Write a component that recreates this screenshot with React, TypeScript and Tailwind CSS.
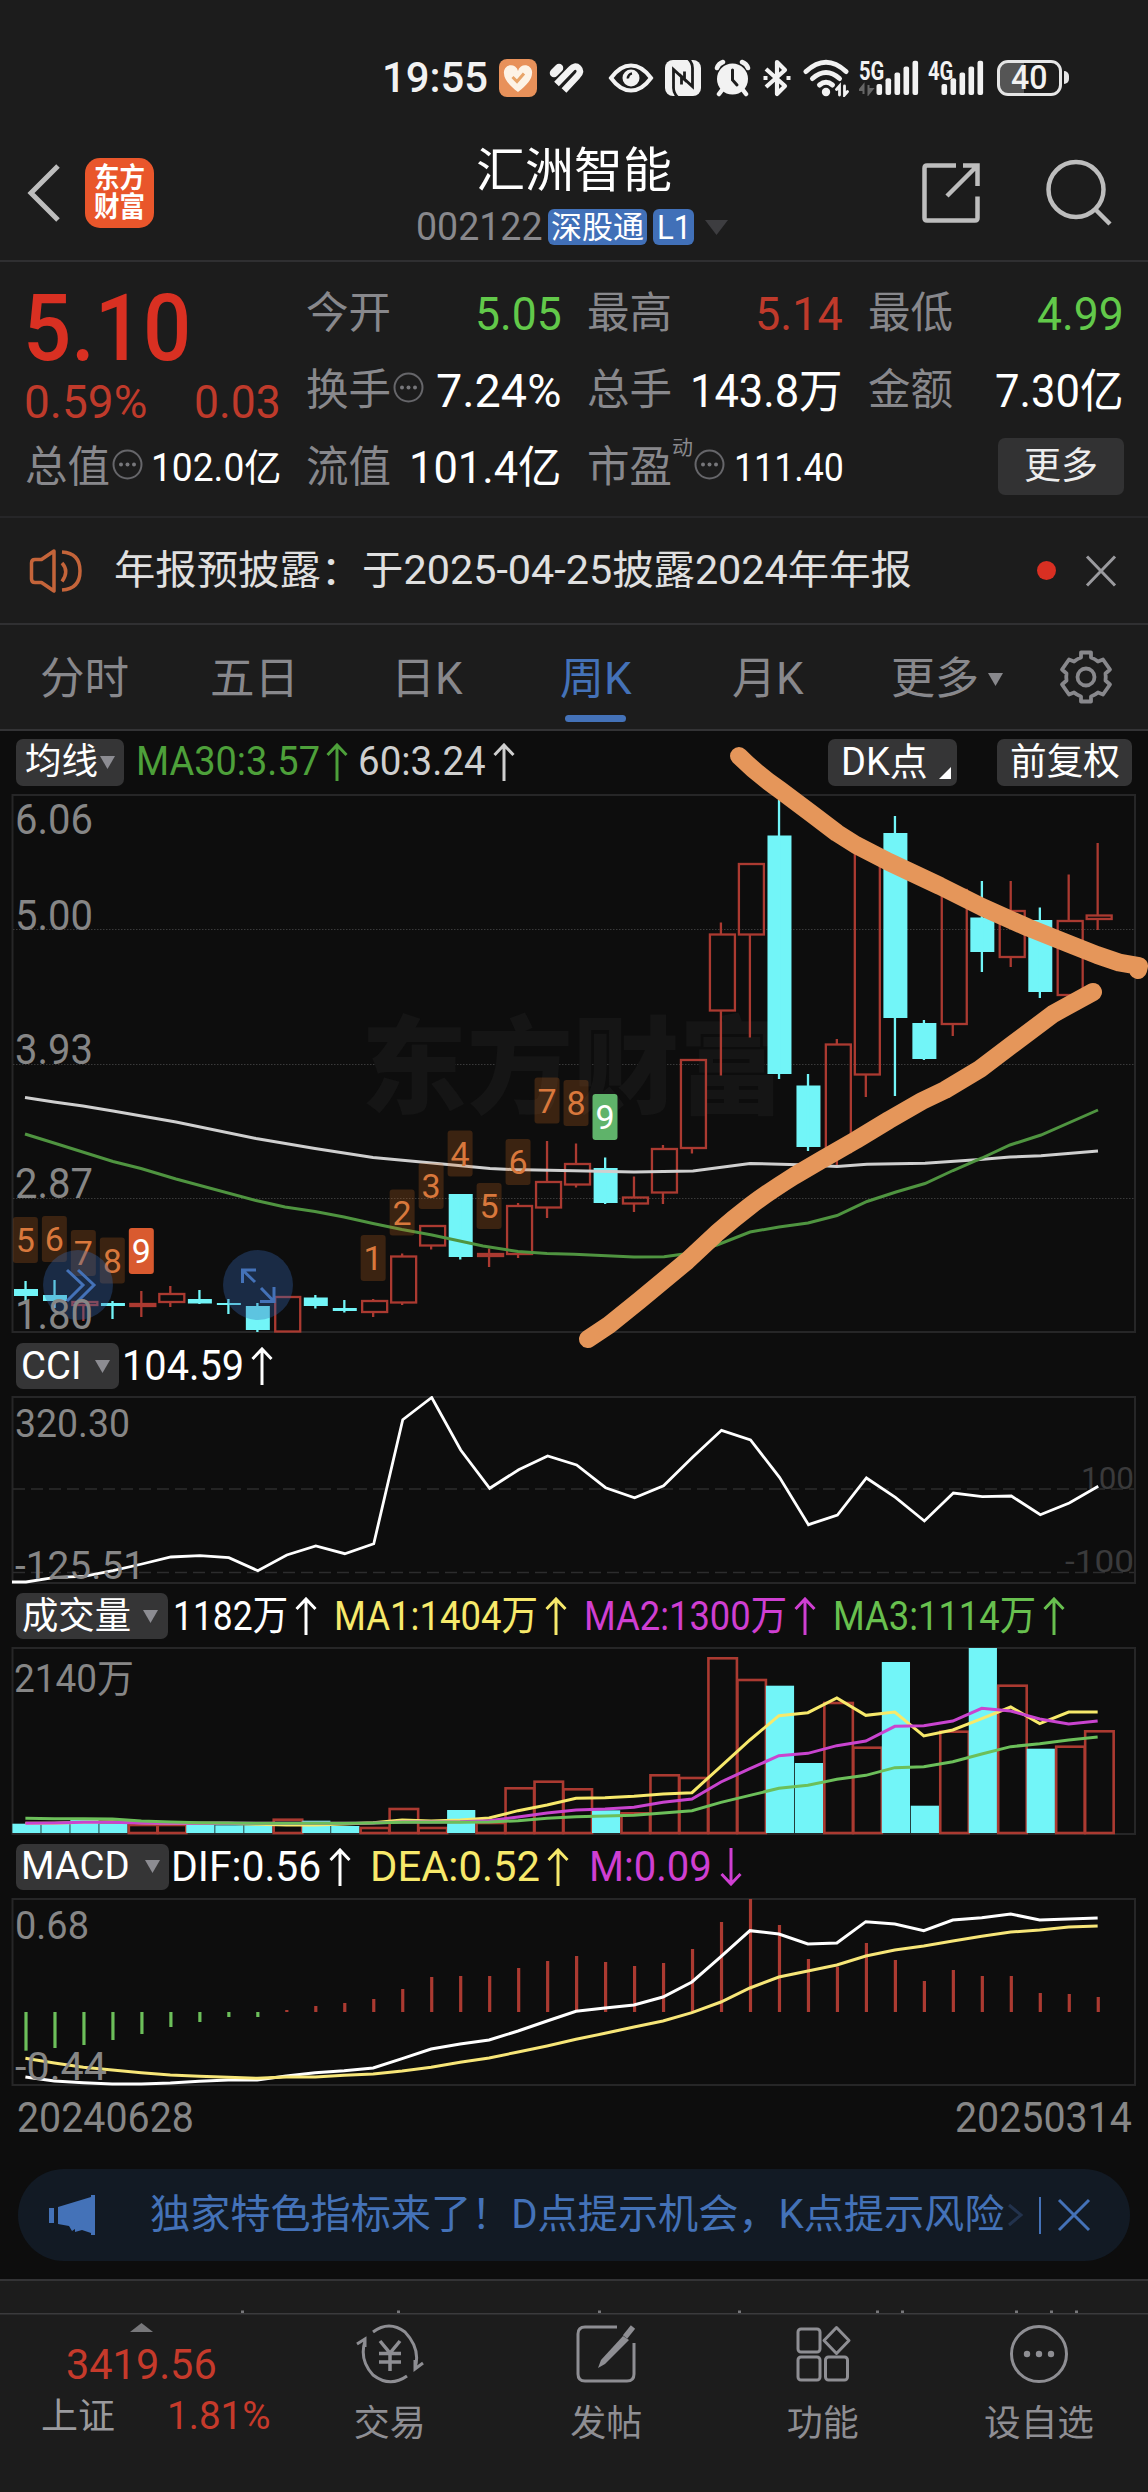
import { useLayoutEffect, useRef, useState } from "react";
import type { ReactNode } from "react";

/* Text squeezed or stretched horizontally to the width of its box. */
function T({ className, children }: { className: string; children: ReactNode }) {
  const box = useRef<HTMLSpanElement>(null);
  const ink = useRef<HTMLSpanElement>(null);
  const [k, setK] = useState(1);
  useLayoutEffect(() => {
    if (box.current && ink.current && ink.current.offsetWidth > 0) {
      setK(box.current.clientWidth / ink.current.offsetWidth);
    }
  }, [children]);
  return (
    <span ref={box} className={`block shrink-0 leading-none whitespace-nowrap ${className}`}>
      <span ref={ink} className="inline-block origin-left" style={{ transform: `scaleX(${k})` }}>
        {children}
      </span>
    </span>
  );
}

/* ---------- status bar ---------- */

function Bars() {
  return (
    <>
      {[0, 1, 2, 3, 4].map((i) => (
        <rect key={i} x={i * 9} y={23 - i * 5.8} width="5.6" height={11 + i * 5.8} rx="2" />
      ))}
    </>
  );
}

function StatusBar() {
  return (
    <div className="flex h-[140px] items-center pt-[15px] pl-[382px] text-[#f2f2f2]">
      <T className="w-[106px] text-[43px] font-medium">19:55</T>
      <svg className="ml-[11px] shrink-0" width="38" height="38" viewBox="0 0 38 38">
        <rect width="38" height="38" rx="8" fill="#e8915a" />
        <path d="M19 33C10 26 5 20 5 14.500a6.800 6.800 0 0 1 14-2.500 6.800 6.800 0 0 1 14 2.500C33 20 28 26 19 33Z" fill="#fdf3e6" />
        <path d="M13.500 18l4.500 4.500 7-8" fill="none" stroke="#e8a468" strokeWidth="3" />
      </svg>
      <svg className="ml-[12px] shrink-0" width="35" height="30" viewBox="0 0 35 30" fill="none" stroke="#f2f2f2" strokeWidth="6.500">
        <path d="M5 10L10 5" strokeWidth="8.500" strokeLinecap="round" />
        <path d="M7.500 21L21.500 6.500Q26 1.500 29.500 5T28.500 13L15 27.500" />
      </svg>
      <svg className="ml-[24px] shrink-0" width="46" height="32" viewBox="0 0 46 32">
        <path d="M3 16Q12 3.500 23 3.500T43 16Q34 28.500 23 28.500T3 16Z" fill="none" stroke="#f2f2f2" strokeWidth="4" />
        <circle cx="23" cy="16" r="8.500" fill="#f2f2f2" />
        <path d="M24 11.500a4.500 4.500 0 0 0-4 5" fill="none" stroke="#1c1c1c" strokeWidth="2.500" />
      </svg>
      <svg className="ml-[11px] shrink-0" width="36" height="36" viewBox="0 0 36 36">
        <rect width="36" height="36" rx="8" fill="#f2f2f2" />
        <path d="M12.500 37Q8.500 33 8.500 28V9.500L19.500 19.500V11.500M23.500 -1Q27.500 3 27.500 8V26.500L16.500 16.500V24.500" fill="none" stroke="#1c1c1c" strokeWidth="2.800" />
      </svg>
      <svg className="ml-[13px] shrink-0" width="37" height="38" viewBox="0 0 37 38" fill="none" stroke="#f2f2f2" strokeLinecap="round">
        <circle cx="18.500" cy="20" r="15.500" fill="#f2f2f2" stroke="none" />
        <path d="M3 9Q4.500 4.500 9 3M34 9Q32.500 4.500 28 3M8 31l-3 4M29 31l3 4" strokeWidth="4.500" />
        <path d="M18.500 11v10l4.500 5" stroke="#1c1c1c" strokeWidth="3" />
      </svg>
      <svg className="ml-[11px] shrink-0" width="30" height="38" viewBox="0 0 30 38" fill="none" stroke="#f2f2f2" strokeWidth="4.200" strokeLinejoin="round">
        <path d="M4 10L23 27l-8 8V3l8 8L4 28M1.500 19h4M24.500 19h4" />
      </svg>
      <svg className="ml-[11px] shrink-0" width="48" height="38" viewBox="0 0 48 38" fill="none" stroke="#f2f2f2" strokeLinecap="round">
        <path d="M3 12.500Q23 -6 43 12.500" strokeWidth="5" />
        <path d="M9.500 19.500Q23 7.500 36.500 19.500" strokeWidth="5" />
        <path d="M16.500 26Q23 20.500 29.500 26" strokeWidth="5" />
        <circle cx="23" cy="33" r="4.200" fill="#f2f2f2" stroke="none" />
        <path d="M36.500 36V27l-3 3.500M41.500 27v9l3-3.500" strokeWidth="2.800" />
      </svg>
      <div className="relative ml-[8px] h-[36px] w-[60px] shrink-0">
        <svg className="absolute top-0 left-0" width="60" height="36" viewBox="0 0 60 36" fill="#f2f2f2">
          <g transform="translate(17.500 1)">
            <Bars />
          </g>
          <path d="M4.500 34v-9l-4 5h4M9.500 25v9l4-5h-4" stroke="#666" strokeWidth="2" fill="#666" />
        </svg>
        <T className="absolute -top-[1px] left-0 w-[25px] text-[25px] font-bold">5G</T>
      </div>
      <div className="relative ml-[9px] h-[36px] w-[56px] shrink-0">
        <svg className="absolute top-0 left-0" width="56" height="36" viewBox="0 0 56 36" fill="#f2f2f2">
          <g transform="translate(13.500 1)">
            <Bars />
          </g>
        </svg>
        <T className="absolute -top-[1px] left-0 w-[25px] text-[25px] font-bold">4G</T>
      </div>
      <div className="ml-[13px] flex h-[36px] w-[65px] shrink-0 items-center justify-center rounded-[11px] border-[3px] border-[#e6e6e6] bg-linear-to-r from-[#555] from-40% to-[#1c1c1c] to-40%">
        <T className="w-[37px] text-[33px] font-medium">40</T>
      </div>
      <div className="ml-[2px] h-[13px] w-[5px] shrink-0 rounded-r-full bg-[#e6e6e6]" />
    </div>
  );
}

/* ---------- title bar ---------- */

function Header() {
  return (
    <div className="flex h-[122px] items-start border-b-2 border-[#2f2f31] pl-[26px]">
      <svg className="mt-[24px] shrink-0" width="36" height="58" viewBox="0 0 36 58" fill="none" stroke="#bdbdbd" strokeWidth="5">
        <path d="M32 2L5 29l27 27" />
      </svg>
      <div className="mt-[18px] ml-[23px] flex h-[70px] w-[69px] shrink-0 flex-col items-center justify-center gap-[1px] rounded-[15px] bg-[#e9562b] text-white">
        <T className="w-[51px] text-[28px] font-bold">东方</T>
        <T className="w-[51px] text-[28px] font-bold">财富</T>
      </div>
      <div className="ml-[263px] w-[314px] shrink-0">
        <div className="flex h-[61px] items-center justify-center text-white">
          <T className="w-[196px] text-[48px]">汇洲智能</T>
        </div>
        <div className="mt-[7px] -ml-[1px] flex h-[38px] items-center">
          <T className="w-[127px] text-[39px] text-[#88888c]">002122</T>
          <span className="ml-[5px] flex h-[36px] w-[99px] items-center justify-center rounded-[6px] bg-[#4170b8] text-white">
            <T className="w-[93px] text-[31px]">深股通</T>
          </span>
          <span className="ml-[6px] flex h-[36px] w-[41px] items-center justify-center rounded-[6px] bg-[#4170b8] text-white">
            <T className="w-[34px] text-[34px]">L1</T>
          </span>
          <svg className="ml-[11px]" width="23" height="15" viewBox="0 0 23 15">
            <path d="M0 0h23L11.500 15Z" fill="#3d3d40" />
          </svg>
        </div>
      </div>
      <svg className="mt-[22px] ml-[190px] shrink-0" width="60" height="62" viewBox="0 0 60 62" fill="none" stroke="#bdbdbd" strokeWidth="4.500">
        <path d="M35 3.500H6q-2.500 0-2.500 2.500V56q0 2.500 2.500 2.500H54q2.500 0 2.500-2.500V34.500M42 3.500H56.500V24M56 4L26 34" />
      </svg>
      <svg className="mt-[19px] ml-[65px] shrink-0" width="68" height="68" viewBox="0 0 68 68" fill="none" stroke="#bdbdbd" strokeWidth="4.500">
        <circle cx="30" cy="30.500" r="27.500" />
        <path d="M49 50l15 15" />
      </svg>
    </div>
  );
}

/* ---------- quote grid ---------- */

const DotsIcon = ({ className }: { className: string }) => (
  <svg className={`shrink-0 ${className}`} width="31" height="31" viewBox="0 0 31 31" fill="#77777b">
    <circle cx="15.500" cy="15.500" r="14" fill="none" stroke="#66666a" strokeWidth="2" />
    <circle cx="9" cy="15.500" r="2" />
    <circle cx="15.500" cy="15.500" r="2" />
    <circle cx="22" cy="15.500" r="2" />
  </svg>
);

const Label = ({ children }: { children: string }) => (
  <T className="w-[85px] text-[43px] text-[#88888c]">{children}</T>
);

function Quote() {
  return (
    <div className="grid h-[256px] grid-cols-[256px_256px_256px_256px] gap-x-[25px] border-b-2 border-[#262628] pt-[13px] pl-[25px] text-white">
      <div>
        <div className="-ml-[2px] flex h-[100px] items-center pt-[7px] text-[#d93022]">
          <T className="w-[168px] text-[93px] font-medium">5.10</T>
        </div>
        <div className="-ml-[1px] flex h-[54px] items-center justify-between text-[#bf3a2b]">
          <T className="w-[123px] text-[46px]">0.59%</T>
          <T className="w-[87px] text-[46px]">0.03</T>
        </div>
        <div className="flex h-[77px] items-center">
          <Label>总值</Label>
          <DotsIcon className="ml-[2px] -mt-[6px]" />
          <T className="ml-[8px] w-[130px] text-[38px]">102.0亿</T>
        </div>
      </div>
      <div>
        <div className="flex h-[77px] items-center justify-between">
          <Label>今开</Label>
          <T className="w-[87px] text-[46px] text-[#62c94a]">5.05</T>
        </div>
        <div className="flex h-[77px] items-center">
          <Label>换手</Label>
          <DotsIcon className="ml-[2px] -mt-[6px]" />
          <T className="ml-[12px] w-[125px] text-[46px]">7.24%</T>
        </div>
        <div className="flex h-[77px] items-center justify-between">
          <Label>流值</Label>
          <T className="w-[153px] text-[44px]">101.4亿</T>
        </div>
      </div>
      <div>
        <div className="flex h-[77px] items-center justify-between">
          <Label>最高</Label>
          <T className="w-[88px] text-[46px] text-[#bf3a2b]">5.14</T>
        </div>
        <div className="flex h-[77px] items-center justify-between">
          <Label>总手</Label>
          <T className="w-[153px] text-[46px]">143.8万</T>
        </div>
        <div className="flex h-[77px] items-center">
          <Label>市盈</Label>
          <T className="mb-[39px] w-[21px] text-[20px] text-[#88888c]">动</T>
          <DotsIcon className="ml-[1px] -mt-[6px]" />
          <T className="ml-[9px] w-[110px] text-[38px]">111.40</T>
        </div>
      </div>
      <div>
        <div className="flex h-[77px] items-center justify-between">
          <Label>最低</Label>
          <T className="w-[87px] text-[46px] text-[#62c94a]">4.99</T>
        </div>
        <div className="flex h-[77px] items-center justify-between">
          <Label>金额</Label>
          <T className="w-[129px] text-[46px]">7.30亿</T>
        </div>
        <div className="flex h-[77px] items-center justify-end">
          <span className="-mt-[3px] flex h-[57px] w-[126px] items-center justify-center rounded-[7px] bg-[#323233] text-[#ececec]">
            <T className="w-[74px] text-[37px]">更多</T>
          </span>
        </div>
      </div>
    </div>
  );
}

function Notice() {
  return (
    <div className="flex h-[107px] items-center border-b-2 border-[#303032] pl-[29px]">
      <svg className="shrink-0" width="56" height="46" viewBox="0 0 56 46" fill="none" stroke="#c4643a" strokeWidth="3.500" strokeLinejoin="round">
        <path d="M25 3L12.500 11.500H6Q2.500 11.500 2.500 15V31Q2.500 34.500 6 34.500H12.500L25 43Z" />
        <path d="M33 15Q40.500 23 33 33.500M33 4Q51 5 51 23T33 42" />
      </svg>
      <T className="ml-[29px] w-[798px] text-[40px] text-[#e0e0e0]">年报预披露：于2025-04-25披露2024年年报</T>
      <span className="ml-[125px] size-[19px] shrink-0 rounded-full bg-[#d92f22]" />
      <svg className="ml-[29px] shrink-0" width="32" height="32" viewBox="0 0 32 32" stroke="#9a9a9e" strokeWidth="3">
        <path d="M2 1.500L30 30.500M30 1.500L2 30.500" />
      </svg>
    </div>
  );
}

function Tabs() {
  return (
    <div className="flex h-[106px] items-center border-b-2 border-[#333335] pt-[4px] pl-[40px] text-[#88888c]">
      <T className="w-[89px] text-[44px]">分时</T>
      <T className="ml-[81px] w-[89px] text-[44px]">五日</T>
      <T className="ml-[92px] w-[72px] text-[44px]">日K</T>
      <div className="relative ml-[97px] w-[72px] shrink-0 text-[#4472b8]">
        <T className="w-[72px] text-[44px]">周K</T>
        <span className="absolute top-[58px] left-[5px] h-[7px] w-[61px] rounded-full bg-[#4472b8]" />
      </div>
      <T className="ml-[100px] w-[72px] text-[44px]">月K</T>
      <T className="ml-[87px] w-[88px] text-[44px]">更多</T>
      <svg className="ml-[9px]" width="15" height="13" viewBox="0 0 15 13">
        <path d="M0 0h15L7.500 13Z" fill="#88888c" />
      </svg>
      <svg className="-mt-[4px] ml-[56px] shrink-0" width="54" height="54" viewBox="0 0 54 54" fill="none" stroke="#88888c" strokeWidth="3.800" strokeLinejoin="round">
        <path d="M22 2.500H32V7.500Q36 9 39 11.500L44 9.500L51 19.500L46.500 23.500Q47 27 46.500 30.500L51 34.500L44 44.500L39 42.500Q36 45 32 46.500V51.500H22V46.500Q18 45 15 42.500L10 44.500L3 34.500L7.500 30.500Q7 27 7.500 23.500L3 19.500L10 9.500L15 11.500Q18 9 22 7.500Z" />
        <circle cx="27" cy="27" r="8.500" />
      </svg>
    </div>
  );
}

/* ---------- charts ---------- */

const STEP = 28.98;
const px = (i: number) => 25.4 + i * STEP;
const RED = "#ab3a31";
const CYAN = "#72f5f8";
const FRAME = "#262627";

const Arrow = ({ className, down = false }: { className: string; down?: boolean }) => (
  <svg className={`shrink-0 ${className}`} width="22" height="38" viewBox="0 0 22 38" fill="none" stroke="currentColor" strokeWidth="3">
    <path d={down ? "M11 0V36M1.500 26L11 36L20.500 26" : "M11 38V2M1.500 12L11 2L20.500 12"} />
  </svg>
);

const Caret = () => (
  <svg width="15" height="13" viewBox="0 0 15 13">
    <path d="M0 0h15L7.500 13Z" fill="#8c8c92" />
  </svg>
);

/* kind, high, body top, body bottom, low */
type Candle = ["u" | "d", number, number, number, number];
const candles: Candle[] = [
  ["d", 1281, 1289, 1296, 1302],
  ["d", 1280, 1295, 1301, 1308],
  ["u", 1299, 1302, 1305, 1321],
  ["d", 1301, 1303, 1306, 1319],
  ["u", 1291, 1304, 1306, 1317],
  ["u", 1286, 1294, 1302, 1307],
  ["d", 1290, 1299, 1303.5, 1304],
  ["d", 1299, 1303, 1305, 1314],
  ["d", 1303, 1306, 1330, 1332],
  ["u", 1297, 1297, 1331.5, 1331.5],
  ["d", 1295, 1297.5, 1306, 1308.5],
  ["d", 1300, 1308, 1311, 1312.5],
  ["u", 1299, 1301, 1312, 1317],
  ["u", 1253.5, 1256.5, 1302.5, 1305],
  ["u", 1226, 1226, 1245.5, 1249.5],
  ["d", 1194, 1194, 1257, 1259.5],
  ["u", 1248.5, 1254, 1256, 1267],
  ["u", 1203, 1206, 1254, 1258],
  ["u", 1141, 1182, 1207.5, 1218],
  ["u", 1143.5, 1164, 1184.5, 1187.5],
  ["d", 1157.5, 1168, 1203, 1204],
  ["u", 1176.5, 1197.5, 1203.5, 1212],
  ["u", 1145, 1149, 1192.5, 1204],
  ["u", 1060, 1060, 1148, 1153.5],
  ["u", 922.5, 934.5, 1010.5, 1075.5],
  ["u", 864, 864, 934.5, 1037.5],
  ["d", 800, 835.5, 1074, 1079],
  ["d", 1074, 1085.5, 1147, 1151],
  ["u", 1039, 1044.5, 1152, 1165],
  ["u", 850, 850, 1074.5, 1097],
  ["d", 816, 833, 1018, 1096],
  ["d", 1020, 1023, 1059, 1060],
  ["u", 890, 890, 1024, 1036],
  ["d", 881, 917.5, 952, 972],
  ["u", 881, 911, 957, 967],
  ["d", 907.5, 920, 992, 998],
  ["u", 874.5, 921, 995, 1000],
  ["u", 843, 915.5, 919, 930],
];

const ma60 =
  "25,1097.500 54,1102 83,1106 113,1111 176,1122 256,1138.500 315,1148.500 373,1157.500 432,1163 490,1168.500 512,1169.500 574,1170.700 634,1172 693,1171 750,1163.500 808,1165 837,1166.500 867,1164.300 925,1163.200 980,1159.500 1010,1157 1041,1155.700 1098,1151";
const ma30 =
  "25,1134 54,1143 113,1161.500 141,1168.500 176,1179 256,1200.500 285,1207 315,1211.500 344,1217 373,1223.500 402,1229.500 432,1235 483,1246 518,1251.500 547,1253.500 574,1254.300 634,1257 664,1256.800 684,1254 717,1245 750,1232 779,1227 808,1223 837,1215.500 867,1201.500 896,1192 925,1183.500 953,1170.500 982,1158 1010,1145 1041,1135 1098,1110";

const marks: [number, string, number, "n" | "r" | "g"][] = [
  [0, "5", 1217, "n"],
  [1, "6", 1216, "n"],
  [2, "7", 1230, "n"],
  [3, "8", 1237.5, "n"],
  [4, "9", 1228, "r"],
  [12, "1", 1235, "n"],
  [13, "2", 1189.5, "n"],
  [14, "3", 1163, "n"],
  [15, "4", 1130.5, "n"],
  [16, "5", 1183, "n"],
  [17, "6", 1139, "n"],
  [18, "7", 1077.5, "n"],
  [19, "8", 1080, "n"],
  [20, "9", 1094, "g"],
];
const markFill = { n: "#e07020", r: "#d95a2f", g: "#5fb36a" };

function Axis({ x, y, w, children, size = 42, fill = "#868686" }: { x: number; y: number; w: number; children: string; size?: number; fill?: string }) {
  return (
    <text x={x} y={y} fontSize={size} fill={fill} textLength={w} lengthAdjust="spacingAndGlyphs">
      {children}
    </text>
  );
}

function MainChart() {
  return (
    <div className="relative">
      <div className="flex h-[62px] items-center pl-[16px]">
        <span className="flex h-[47px] w-[108px] shrink-0 items-center justify-between rounded-[7px] bg-[#353536] pr-[9px] pl-[9px] text-white">
          <T className="w-[73px] text-[36px]">均线</T>
          <Caret />
        </span>
        <div className="ml-[12px] flex items-center text-[#4da03a]">
          <T className="w-[184px] text-[40px]">MA30:3.57</T>
          <Arrow className="ml-[6px]" />
        </div>
        <div className="ml-[10px] flex items-center text-[#cfcfcf]">
          <T className="w-[128px] text-[40px]">60:3.24</T>
          <Arrow className="ml-[7px]" />
        </div>
        <span className="relative ml-[313px] flex h-[47px] w-[129px] shrink-0 items-center rounded-[7px] bg-[#353536] pl-[13px] text-white">
          <T className="w-[87px] text-[38px]">DK点</T>
          <svg className="absolute right-[6px] bottom-[7px]" width="12" height="12" viewBox="0 0 12 12">
            <path d="M12 0V12H0Z" fill="#fff" />
          </svg>
        </span>
        <span className="ml-[40px] flex h-[47px] w-[135px] shrink-0 items-center justify-center rounded-[7px] bg-[#353536] text-white">
          <T className="w-[110px] text-[37px]">前复权</T>
        </span>
      </div>
      <svg className="block" width="1148" height="543" viewBox="0 793 1148 543" fill="none">
        <rect x="12.500" y="795" width="1122.500" height="537" stroke={FRAME} strokeWidth="2" />
        <path d="M13 929.500H1134M13 1064.500H1134M13 1198.500H1134" stroke="#3a3a3b" strokeDasharray="1.500 1.500" />
        <text x="361" y="1105" fontSize="106" fontWeight="900" fill="#151515" textLength="424" lengthAdjust="spacingAndGlyphs">
          东方财富
        </text>
        {candles.map(([k, h, t, b, l], i) =>
          k === "u" ? (
            <g key={i} stroke={RED} strokeWidth="2.300">
              <path d={`M${px(i)} ${h}V${t}M${px(i)} ${b}V${l}`} />
              <rect x={px(i) - 11} y={t} width="25" height={b - t} />
            </g>
          ) : (
            <g key={i} fill={CYAN}>
              <rect x={px(i) - 11.4} y={t} width="24" height={b - t} />
              <rect x={px(i) - 1} y={h} width="2.300" height={l - h} />
            </g>
          ),
        )}
        <polyline points={ma60} stroke="#cfcfcf" strokeWidth="3" />
        <polyline points={ma30} stroke="#4f9440" strokeWidth="3" />
        {marks.map(([i, n, y, k]) => (
          <g key={i}>
            <rect x={px(i) - 12.5} y={y} width="25" height="46" rx="3" fill={markFill[k]} fillOpacity={k === "n" ? 0.22 : 1} />
            <text x={px(i)} y={y + 35} fontSize="34" textAnchor="middle" fill={k === "n" ? "#d9783c" : "#fff"}>
              {n}
            </text>
          </g>
        ))}
        <g fill="#3466b4" fillOpacity="0.34">
          <circle cx="78" cy="1285" r="35" />
          <circle cx="258" cy="1285" r="35" />
        </g>
        <g stroke="#4472b8" strokeWidth="3">
          <path d="M67 1270L83 1285L67 1301M78 1270L94 1285L78 1301" />
          <path d="M242.500 1283V1270H256M243 1270.500L255 1282M261 1288L273.500 1301M274 1287V1301.500H260" />
        </g>
        <Axis x={15} y={834} w={78}>6.06</Axis>
        <Axis x={15} y={929.5} w={78}>5.00</Axis>
        <Axis x={15} y={1064} w={78}>3.93</Axis>
        <Axis x={15} y={1198} w={78}>2.87</Axis>
        <Axis x={15} y={1329} w={78}>1.80</Axis>
      </svg>
      <svg className="pointer-events-none absolute top-0 left-0" width="1148" height="630" viewBox="0 731 1148 630" fill="none" stroke="#e5965a" strokeWidth="18" strokeLinecap="round" strokeLinejoin="round">
        <path d="M739 756Q758 775 780 790L812 814L837 833L856 845L889 862L940 886L982 907L1028 927.500L1068 943.500L1097 955L1119 962.500L1139 966L1138 970" />
        <path d="M588 1339L609 1325L640 1300L687 1261L717 1233Q733 1219 750 1206T794 1176L823 1159L856 1140L889 1120L922 1101L945 1090L980 1069L1013 1044L1053 1014L1093 992" />
      </svg>
    </div>
  );
}

const cci = [
  185, 180.3, 179.3, 173.7, 167, 160, 158.7, 160.7, 173.7, 158, 149, 156.7, 146.7, 22.7, 0.5, 53, 91.3, 72.7, 59, 68, 90.7, 100.7,
  88.7, 60.3, 33.3, 43, 80.3, 127.7, 118, 81, 100.3, 124, 96, 99.7, 99, 117.7, 106, 89.3,
];

function CciChart() {
  return (
    <div>
      <div className="flex h-[60px] items-center pl-[16px] text-white">
        <span className="flex h-[46px] w-[103px] shrink-0 items-center justify-between rounded-[7px] bg-[#353536] pr-[9px] pl-[5px]">
          <T className="w-[60px] text-[39px]">CCI</T>
          <Caret />
        </span>
        <T className="ml-[3px] w-[122px] text-[42px]">104.59</T>
        <Arrow className="ml-[7px]" />
      </div>
      <svg className="block" width="1148" height="189" viewBox="0 1396 1148 189" fill="none">
        <rect x="12.500" y="1397" width="1122.500" height="186" stroke={FRAME} strokeWidth="2" />
        <path d="M13 1489H1134M13 1572.500H1134" stroke="#2c2c2d" strokeWidth="1.500" strokeDasharray="12 6" />
        <Axis x={1081} y={1488.5} w={53} size={31} fill="#3a3a3b">100</Axis>
        <Axis x={1065} y={1571.5} w={69} size={31} fill="#3a3a3b">-100</Axis>
        <polyline points={`12,1582 ${cci.map((v, i) => `${px(i) + 0.6},${1397 + v}`).join(" ")}`} stroke="#fff" strokeWidth="2.800" />
        <Axis x={15} y={1437} w={115} size={39}>320.30</Axis>
        <Axis x={15} y={1578.5} w={130} size={39}>-125.51</Axis>
      </svg>
    </div>
  );
}

const volume: ["u" | "d", number][] = [
  ["d", 9.3], ["d", 9.3], ["d", 13.3], ["d", 9.3], ["u", 9], ["u", 9], ["d", 8.3], ["d", 7.7], ["d", 7.7], ["u", 14.3],
  ["d", 12.3], ["d", 7], ["u", 6], ["u", 25], ["u", 6], ["d", 23], ["u", 11], ["u", 45.7], ["u", 52.3], ["u", 44.7],
  ["d", 22.7], ["u", 20.7], ["u", 58.7], ["u", 56], ["u", 175.7], ["u", 154], ["d", 147.3], ["d", 70], ["u", 131], ["u", 86.3],
  ["d", 171], ["d", 27.3], ["u", 102.3], ["d", 185], ["u", 148.3], ["d", 84.3], ["u", 87.3], ["u", 102.7],
];
const volMa1 = [
  1450, 1450, 1447, 1445, 1448, 1450, 1450, 1450, 1453, 1455, 1455, 1452, 1448, 1440, 1443, 1440, 1434, 1412, 1395, 1375, 1373, 1369,
  1362, 1358, 1279, 1200, 1127, 1118, 1074, 1126, 1116, 1188, 1170, 1136, 1101, 1151, 1116, 1116,
];
const volMa2 = [
  1450, 1449, 1447, 1447, 1449, 1450, 1450, 1449, 1450, 1450, 1450, 1450, 1449, 1446, 1446, 1445, 1442, 1431, 1419, 1410, 1407, 1402,
  1387, 1377, 1326, 1286, 1247, 1240, 1217, 1203, 1159, 1157, 1143, 1105, 1113, 1137, 1152, 1143,
];
const volMa3 = [
  1435, 1436, 1436, 1437, 1443, 1446, 1448, 1449, 1450, 1450, 1450, 1450, 1449, 1447, 1447, 1447, 1446, 1442, 1435, 1430, 1428, 1426,
  1419, 1412, 1387, 1366, 1345, 1336, 1318, 1306, 1283, 1280, 1265, 1242, 1220, 1211, 1200, 1191,
];
const scaled = (vs: number[], base: number) => vs.map((v, i) => `${px(i)},${base + v / 3}`).join(" ");

function VolumeChart() {
  return (
    <div>
      <div className="flex h-[62px] items-center pl-[16px] text-white">
        <span className="flex h-[46px] w-[152px] shrink-0 items-center justify-between rounded-[7px] bg-[#353536] pr-[10px] pl-[6px]">
          <T className="w-[109px] text-[37px]">成交量</T>
          <Caret />
        </span>
        <T className="ml-[5px] w-[115px] text-[41px]">1182万</T>
        <Arrow className="ml-[7px]" />
        <div className="ml-[17px] flex items-center text-[#f7e96b]">
          <T className="w-[204px] text-[41px]">MA1:1404万</T>
          <Arrow className="ml-[7px]" />
        </div>
        <div className="ml-[17px] flex items-center text-[#cf3fd2]">
          <T className="w-[203px] text-[41px]">MA2:1300万</T>
          <Arrow className="ml-[7px]" />
        </div>
        <div className="ml-[17px] flex items-center text-[#68c04f]">
          <T className="w-[203px] text-[41px]">MA3:1114万</T>
          <Arrow className="ml-[7px]" />
        </div>
      </div>
      <svg className="block" width="1148" height="189" viewBox="0 1647 1148 189" fill="none">
        <rect x="12.500" y="1648" width="1122.500" height="186" stroke={FRAME} strokeWidth="2" />
        {volume.map(([k, h], i) =>
          k === "u" ? (
            <rect key={i} x={px(i) - 12.5} y={1834 - h} width="28.500" height={h - 1} stroke={RED} strokeWidth="2.600" />
          ) : (
            <rect key={i} x={px(i) - 13} y={1833 - h} width="28.200" height={h} fill={CYAN} />
          ),
        )}
        <polyline points={scaled(volMa1, 1340)} stroke="#f7e96b" strokeWidth="3" />
        <polyline points={scaled(volMa2, 1340)} stroke="#c944cf" strokeWidth="3" />
        <polyline points={scaled(volMa3, 1340)} stroke="#6cbf5a" strokeWidth="3" />
        <Axis x={14} y={1692} w={120} size={39}>2140万</Axis>
      </svg>
    </div>
  );
}

const hist = [
  632, 624, 615, 600, 582, 561, 546, 531, 531, 510, 498, 489, 477, 447, 411, 408, 408, 384, 363, 348, 366, 378, 369, 327, 246, 177,
  255, 357, 380, 309, 360, 423, 390, 408, 408, 459, 462, 471,
];
const dif = [
  711, 723, 728, 732, 732, 729, 724, 720, 720, 708, 698, 692, 684, 656, 627, 612, 600, 573, 543, 514, 504, 495, 471, 426, 350, 272,
  282, 312, 309, 245, 252, 272, 240, 233, 222, 240, 237, 234,
];
const dea = [
  655, 669, 682, 690, 698, 705, 709, 712, 715, 711, 711, 706, 702, 693, 682, 667, 654, 636, 618, 598, 580, 561, 543, 518, 486, 444,
  411, 393, 375, 348, 330, 318, 303, 289, 276, 270, 261, 258,
];

function MacdChart() {
  return (
    <div>
      <div className="flex h-[61px] items-center pl-[16px] text-white">
        <span className="flex h-[46px] w-[153px] shrink-0 items-center justify-between rounded-[7px] bg-[#353536] pr-[9px] pl-[5px]">
          <T className="w-[109px] text-[39px]">MACD</T>
          <Caret />
        </span>
        <T className="ml-[2px] w-[150px] text-[42px]">DIF:0.56</T>
        <Arrow className="ml-[8px]" />
        <div className="ml-[19px] flex items-center text-[#f7e96b]">
          <T className="w-[170px] text-[42px]">DEA:0.52</T>
          <Arrow className="ml-[7px]" />
        </div>
        <div className="ml-[20px] flex items-center text-[#cf3fd2]">
          <T className="w-[123px] text-[42px]">M:0.09</T>
          <Arrow className="ml-[8px]" down />
        </div>
      </div>
      <svg className="block" width="1148" height="191" viewBox="0 1897 1148 191" fill="none">
        <rect x="12.500" y="1899" width="1122.500" height="186" stroke={FRAME} strokeWidth="2" />
        {hist.map((v, i) => (
          <path key={i} d={`M${px(i) + 0.6} 2012V${1840 + v / 3}`} stroke={v > 516 ? "#6cbf5a" : RED} strokeWidth="3.200" />
        ))}
        <polyline points={scaled(dif, 1840)} stroke="#fff" strokeWidth="3" />
        <polyline points={scaled(dea, 1840)} stroke="#f7e678" strokeWidth="3" />
        <Axis x={15} y={1938.5} w={74} size={39}>0.68</Axis>
        <Axis x={15} y={2080} w={92} size={39}>-0.44</Axis>
      </svg>
      <div className="flex h-[56px] items-center justify-between pt-[3px] pr-[16px] pl-[17px] text-[#868686]">
        <T className="w-[177px] text-[42px]">20240628</T>
        <T className="w-[177px] text-[42px]">20250314</T>
      </div>
    </div>
  );
}

function Banner() {
  return (
    <div className="h-[135px] pt-[25px] pl-[18px]">
      <div className="flex h-[92px] w-[1112px] items-center rounded-full bg-[#121a24] pl-[31px] text-[#4472b8]">
        <svg className="shrink-0" width="47" height="41" viewBox="0 0 47 41" fill="currentColor">
          <path d="M0 13h5v15H0ZM9 12L42 2V0h4V40h-4V38L33 35L26 37V34L23 36L20 31L9 29Z" />
        </svg>
        <T className="ml-[54px] w-[854px] text-[40px]">独家特色指标来了！D点提示机会，K点提示风险</T>
        <svg className="ml-[3px] shrink-0" width="18" height="26" viewBox="0 0 18 26" fill="none" stroke="#22324c" strokeWidth="3">
          <path d="M2 3L14 13L2 23" />
        </svg>
        <span className="ml-[14px] h-[37px] w-[2px] shrink-0 bg-[#4472b8]" />
        <svg className="ml-[16px] shrink-0" width="34" height="34" viewBox="0 0 34 34" stroke="currentColor" strokeWidth="3">
          <path d="M2 2L32 32M32 2L2 32" />
        </svg>
      </div>
    </div>
  );
}

/* ---------- bottom navigation ---------- */

function NavItem({ icon, label, wide = false }: { icon: ReactNode; label: string; wide?: boolean }) {
  return (
    <div className="flex w-[216.5px] shrink-0 flex-col items-center pt-[7px] text-[#8e8e93]">
      <svg width="70" height="64" viewBox="0 0 70 64" fill="none" stroke="currentColor" strokeWidth="3">
        {icon}
      </svg>
      <T className={wide ? "mt-[20px] w-[110px] text-[36px]" : "mt-[20px] w-[72px] text-[36px]"}>{label}</T>
    </div>
  );
}

const SPECKS = [241, 397, 598, 738, 876, 901, 1015, 1050, 1075];

function BottomNav() {
  return (
    <div>
      <div className="border-t-2 border-[#333335]">
        <svg className="block" width="1148" height="34" viewBox="0 0 1148 34">
          {SPECKS.map((x) => (
            <rect key={x} x={x} y="29.500" width="3" height="2.500" fill="#77777a" />
          ))}
          <rect y="32" width="1148" height="1.500" fill="#3a3a3c" />
        </svg>
      </div>
      <div className="flex h-[177px]">
        <div className="w-[281.5px] shrink-0">
          <svg className="mt-[8px] ml-[130px] block" width="23" height="9" viewBox="0 0 23 9">
            <path d="M0 9L11.500 0L23 9Z" fill="#77777a" />
          </svg>
          <div className="mt-[9px] ml-[66px] flex h-[48px] items-center text-[#c63a2b]">
            <T className="w-[151px] text-[42px]">3419.56</T>
          </div>
          <div className="flex h-[54px] items-center pt-[1px] pl-[41px]">
            <T className="w-[74px] text-[36px] text-[#9a9a9e]">上证</T>
            <T className="ml-[52px] w-[104px] text-[39px] text-[#c63a2b]">1.81%</T>
          </div>
        </div>
        <NavItem
          label="交易"
          icon={
            <>
              <path d="M18 10Q34 -2 50 10Q66 27 60 46M52 54Q35 66 18 53Q4 38 10 19M2 22L10 17V25M68 41L60 47V38" />
              <path d="M25 19L35 31L45 19M35 31V49M24 31.500H46M24 40H46" strokeWidth="3.500" />
            </>
          }
        />
        <NavItem
          label="发帖"
          icon={
            <>
              <path d="M46 5H14Q7 5 7 12V52Q7 59 14 59H56Q63 59 63 52V21" />
              <path d="M62 5L54 15" strokeWidth="5.500" />
              <path d="M52 14L58 18L34 42L27 46L30 38Z" fill="currentColor" stroke="none" />
            </>
          }
        />
        <NavItem
          label="功能"
          icon={
            <>
              <rect x="10" y="7" width="22" height="23" rx="3" />
              <path d="M48.500 5.500L61 18.500L48.500 31.500L36 18.500Z" strokeLinejoin="round" />
              <rect x="10" y="35" width="22" height="23" rx="3" />
              <rect x="37.500" y="35" width="22" height="23" rx="3" />
            </>
          }
        />
        <NavItem
          label="设自选"
          wide
          icon={
            <>
              <circle cx="35" cy="32" r="27.500" />
              <g fill="currentColor" stroke="none">
                <circle cx="23" cy="32" r="3.200" />
                <circle cx="35" cy="32" r="3.200" />
                <circle cx="47" cy="32" r="3.200" />
              </g>
            </>
          }
        />
      </div>
    </div>
  );
}

export default function App() {
  return (
    <div className="h-[2492px] w-[1148px] overflow-hidden bg-[#1c1c1c] font-['Roboto','Noto_Sans_CJK_SC',sans-serif]">
      <StatusBar />
      <Header />
      <Quote />
      <Notice />
      <Tabs />
      <div className="bg-[#0d0d0d]">
        <MainChart />
        <CciChart />
        <VolumeChart />
        <MacdChart />
        <Banner />
      </div>
      <BottomNav />
    </div>
  );
}
